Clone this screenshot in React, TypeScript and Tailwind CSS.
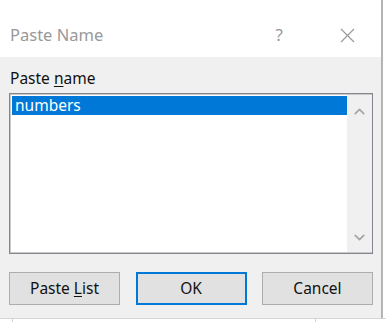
import { ChevronDown, ChevronUp } from 'lucide-react'

function DialogButton({
  children,
  primary,
}: {
  children: React.ReactNode
  primary?: boolean
}) {
  return (
    <button
      type="button"
      className={`h-[33px] w-[111px] bg-[#e1e1e1] text-[15.5px] text-[#111] flex items-center justify-center ${
        primary ? 'border-2 border-[#0078d7]' : 'border border-[#adadad]'
      }`}
    >
      {children}
    </button>
  )
}

export default function App() {
  return (
    <div
      className="w-[386px] h-[322px] bg-white flex flex-col overflow-hidden"
      style={{ fontFamily: '"Noto Sans", "Open Sans", sans-serif' }}
    >
      <div className="flex">
        <div className="w-[383px] h-[318px] flex flex-col border-r-2 border-[#b4b4b4]">
          {/* title bar */}
          <div className="h-[57px] bg-white flex items-center pl-[10px] pt-[13px]">
            <span className="text-[16.5px] text-[#999]">Paste Name</span>
            <span className="ml-auto text-[17px] text-[#999] mr-[57px]">?</span>
            <svg
              width="15"
              height="15"
              viewBox="0 0 15 15"
              className="mr-[26px]"
              stroke="#9a9a9a"
              strokeWidth="1.2"
            >
              <path d="M1 1 L14 14 M14 1 L1 14" />
            </svg>
          </div>

          {/* body */}
          <div className="flex-1 bg-[#f0f0f0] flex flex-col px-[9px] pt-[11px]">
            <div className="text-[15.5px] text-[#111] leading-[20px] pl-[1px]">
              Paste <span className="underline underline-offset-2">n</span>ame
            </div>
            <div className="mt-[5px] w-[364px] h-[161px] bg-white border border-[#82878f] flex">
              <div className="flex-1 border border-[#c9c9c9] border-r-0 flex">
                <div className="flex-1 pt-[1px] pl-[1px]">
                  <div className="h-[19px] bg-[#0078d7] text-white text-[15.5px] leading-[19px] pl-[3px]">
                    numbers
                  </div>
                </div>
                <div className="w-[25px] bg-[#f0f0f0] flex flex-col items-center justify-between pt-[8px] pb-[6px] text-[#a6a6a6]">
                  <ChevronUp size={17} strokeWidth={2.5} />
                  <ChevronDown size={17} strokeWidth={2.5} />
                </div>
              </div>
            </div>
            <div className="mt-[18px] flex justify-between w-[364px]">
              <DialogButton>
                Paste <span className="underline underline-offset-2 ml-[4px]">L</span>ist
              </DialogButton>
              <DialogButton primary>OK</DialogButton>
              <DialogButton>Cancel</DialogButton>
            </div>
          </div>
        </div>
        <div className="flex-1 bg-white" />
      </div>
      <div className="flex-1 border-t border-[#d4d4d4] flex">
        <div className="w-[13px] border-r border-[#d4d4d4]" />
        <div className="w-[303px] border-r border-[#d4d4d4]" />
      </div>
    </div>
  )
}
